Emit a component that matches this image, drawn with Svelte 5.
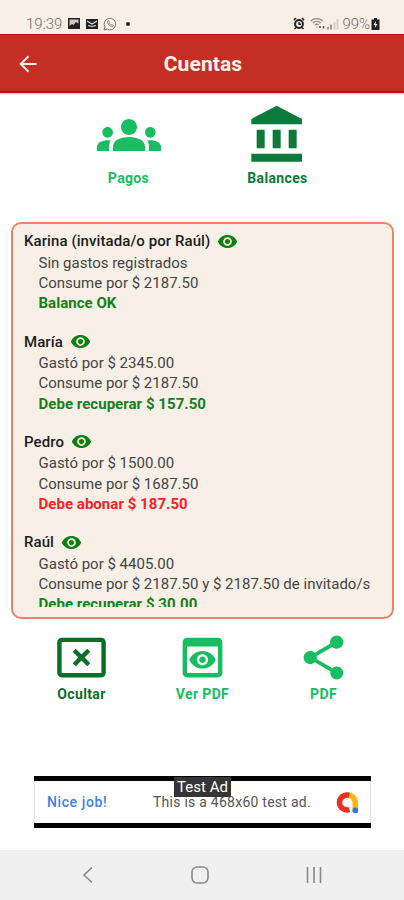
<script lang="ts">
  type Person = {
    name: string;
    lines: string[];
    result: string;
    owes?: boolean;
  };

  const people: Person[] = [
    {
      name: "Karina (invitada/o por Raúl)",
      lines: ["Sin gastos registrados", "Consume por $ 2187.50"],
      result: "Balance OK",
    },
    {
      name: "María",
      lines: ["Gastó por $ 2345.00", "Consume por $ 2187.50"],
      result: "Debe recuperar $ 157.50",
    },
    {
      name: "Pedro",
      lines: ["Gastó por $ 1500.00", "Consume por $ 1687.50"],
      result: "Debe abonar $ 187.50",
      owes: true,
    },
    {
      name: "Raúl",
      lines: [
        "Gastó por $ 4405.00",
        "Consume por $ 2187.50 y $ 2187.50 de invitado/s",
      ],
      result: "Debe recuperar $ 30.00",
    },
  ];
</script>

<div class="screen">
  <div class="status">
    <span class="time">19:39</span>
    <svg class="s-img" width="12" height="11" viewBox="0 0 12 11">
      <path d="M0 0h12v11H0z" fill="#222" />
      <path d="M1.5 1.5h9v4L8 4 5.5 7 4 6 1.5 8z" fill="#cfc8c0" />
    </svg>
    <svg class="s-mail" width="12" height="10" viewBox="0 0 12 10">
      <path d="M0 0h12v10H0z" fill="#222" />
      <path d="M1 2l5 3 5-3M2 6.5l4 1 4-1" fill="none" stroke="#e8e0d8" stroke-width="1.1" />
    </svg>
    <svg class="s-wa" width="14" height="14" viewBox="0 0 14 14" fill="none" stroke="#777">
      <path d="M1 13l.9-3A5.8 5.8 0 1 1 4.200 12.200z" />
      <path d="M4.500 4.200c0 3 2.300 5.300 5.200 5.500l.6-1.500-1.600-.8-.8.7-2-2 .6-.9-.8-1.500z" stroke-width=".8" />
    </svg>
    <span class="dot"></span>
    <div class="right">
      <svg width="12" height="13" viewBox="0 0 12 13">
        <circle cx="6" cy="7" r="3.900" fill="none" stroke="#222" stroke-width="2" />
        <path d="M.8 3.200L3 1M11.200 3.200L9 1M3 10.500L1.500 12M9 10.500l1.500 1.500M6 5v2.300h2" fill="none" stroke="#222" stroke-width="1.500" />
      </svg>
      <svg class="s-wifi" width="15" height="13" viewBox="0 0 15 13" fill="none" stroke="#888">
        <path d="M.7 4a9 9 0 0 1 12 0M2.700 6a6 6 0 0 1 8 0M4.700 8a3 3 0 0 1 4 0" stroke-width="1.200" />
        <path d="M6.700 10.500v-1" stroke-width="1.500" />
        <path d="M9 10h2M13.500 9v2.500" stroke="#444" stroke-width="1.500" />
      </svg>
      <svg class="s-signal" width="12" height="12" viewBox="0 0 12 12">
        <path d="M0 11.500h2V9H0zM3 11.500h2V6.500H3z" fill="#999" />
        <path d="M6.500 11.500h2V4h-2zM9.500 11.500h2V1h-2z" fill="#d5cfc8" />
      </svg>
      <span class="percent">99%</span>
      <svg width="9" height="12" viewBox="0 0 9 12">
        <path d="M3 0h3v1.500h2.500V12h-8V1.500H3z" fill="#222" />
        <path d="M5 3L2.500 7h1.800L3.800 10 6.500 6H4.700z" fill="#f8f0e7" />
      </svg>
    </div>
  </div>

  <header>
    <svg class="back" width="18" height="18" viewBox="0 0 18 18" fill="none" stroke="#fbeee6" stroke-width="2">
      <path d="M17.500 9H2M9.500 1.200L1.700 9l7.800 7.800" />
    </svg>
    <h1>Cuentas</h1>
  </header>

  <div class="top-actions">
    <button class="action light">
      <svg width="64" height="64" viewBox="0 0 24 24">
        <path d="M12 12.750c1.630 0 3.070.39 4.240.9 1.080.48 1.760 1.560 1.760 2.730V18H6v-1.610c0-1.180.68-2.260 1.760-2.730 1.170-.52 2.610-.91 4.240-.91zM4 13c1.100 0 2-.9 2-2s-.9-2-2-2-2 .9-2 2 .9 2 2 2zm1.130 1.100c-.37-.06-.74-.1-1.130-.1-.99 0-1.930.21-2.780.58C.48 14.900 0 15.620 0 16.430V18h4.500v-1.610c0-.83.23-1.610.63-2.290zM20 13c1.100 0 2-.9 2-2s-.9-2-2-2-2 .9-2 2 .9 2 2 2zm4 3.430c0-.81-.48-1.530-1.220-1.850-.85-.37-1.790-.58-2.780-.58-.39 0-.76.04-1.130.1.4.68.63 1.460.63 2.290V18H24v-1.570zM12 6c1.660 0 3 1.340 3 3s-1.340 3-3 3-3-1.340-3-3 1.340-3 3-3z" />
      </svg>
      <span>Pagos</span>
    </button>
    <button class="action dark">
      <svg width="64" height="64" viewBox="0 0 24 24">
        <path d="M11.500 1L2 6v2h19V6M16 10v7h3v-7M2 22h19v-3H2M10 10v7h3v-7M4 10v7h3v-7z" />
      </svg>
      <span>Balances</span>
    </button>
  </div>

  <div class="card">
    <div class="list">
      {#each people as person}
        <section>
          <div class="name">
            <span>{person.name}</span>
            <svg width="21" height="21" viewBox="0 0 24 24" fill="#0b8010">
              <path d="M12 4.500C7 4.500 2.730 7.610 1 12c1.730 4.390 6 7.500 11 7.500s9.270-3.110 11-7.500c-1.730-4.390-6-7.500-11-7.500zM12 17c-2.760 0-5-2.240-5-5s2.240-5 5-5 5 2.240 5 5-2.240 5-5 5zm0-8c-1.660 0-3 1.340-3 3s1.340 3 3 3 3-1.340 3-3-1.340-3-3-3z" />
            </svg>
          </div>
          {#each person.lines as line}
            <p>{line}</p>
          {/each}
          <p class="result" class:owes={person.owes}>{person.result}</p>
        </section>
      {/each}
    </div>
  </div>

  <div class="bottom-actions">
    <button class="action dark">
      <svg width="53" height="53" viewBox="0 0 24 24">
        <path d="M21 3H3c-1.100 0-2 .9-2 2v14c0 1.100.9 2 2 2h18c1.100 0 2-.9 2-2V5c0-1.100-.9-2-2-2zm0 16H3V5h18v14zM9.410 16L12 13.410 14.590 16 16 14.590 13.410 12 16 9.410 14.590 8 12 10.590 9.410 8 8 9.410 10.590 12 8 14.590z" />
      </svg>
      <span>Ocultar</span>
    </button>
    <button class="action light">
      <svg width="53" height="53" viewBox="0 0 24 24">
        <path d="M19 3H5c-1.110 0-2 .9-2 2v14c0 1.100.89 2 2 2h14c1.100 0 2-.9 2-2V5c0-1.100-.89-2-2-2zm0 16H5V7h14v12zM13.500 13c0 .83-.67 1.500-1.500 1.500s-1.500-.67-1.500-1.500.67-1.500 1.500-1.500 1.500.67 1.500 1.500zM12 9c-2.730 0-5.060 1.660-6 4 .94 2.340 3.270 4 6 4s5.060-1.660 6-4c-.94-2.340-3.270-4-6-4zm0 6.500c-1.380 0-2.500-1.120-2.500-2.500s1.120-2.500 2.500-2.500 2.500 1.120 2.500 2.500-1.120 2.500-2.500 2.500z" />
      </svg>
      <span>Ver PDF</span>
    </button>
    <button class="action light">
      <svg width="53" height="53" viewBox="0 0 24 24">
        <path d="M18 16.080c-.76 0-1.440.3-1.960.77L8.910 12.700c.05-.23.09-.46.09-.7s-.04-.47-.09-.7l7.050-4.110c.54.5 1.250.81 2.040.81 1.660 0 3-1.340 3-3s-1.340-3-3-3-3 1.340-3 3c0 .24.04.47.09.7L8.040 9.810C7.500 9.310 6.790 9 6 9c-1.660 0-3 1.340-3 3s1.340 3 3 3c.79 0 1.500-.31 2.040-.81l7.120 4.160c-.05.21-.08.43-.08.65 0 1.610 1.310 2.920 2.920 2.920s2.920-1.310 2.920-2.920-1.310-2.920-2.920-2.920z" />
      </svg>
      <span>PDF</span>
    </button>
  </div>

  <div class="ad">
    <span class="nice">Nice job!</span>
    <span class="copy">This is a 468x60 test ad.</span>
    <svg width="23" height="23" viewBox="0 0 23 23" fill="none" stroke-width="5.500">
      <path d="M11.500 4a8 7.500 0 0 1 7.800 7.500V19" stroke="#fbb60c" />
      <path d="M13.500 18.700A7.800 7.500 0 1 1 13 4.200" stroke="#e8301f" />
      <circle cx="19.300" cy="19.300" r="2.900" fill="#2f74e0" />
    </svg>
    <span class="badge">Test Ad</span>
  </div>

  <nav>
    <svg width="12" height="18" viewBox="0 0 12 18">
      <path d="M10 1.500L2 9l8 7.500" />
    </svg>
    <svg class="home" width="18" height="18" viewBox="0 0 18 18">
      <rect x="1" y="1" width="16" height="16" rx="5" />
    </svg>
    <svg width="16" height="16" viewBox="0 0 16 16">
      <path d="M1.500 0v16M8 0v16M14.500 0v16" />
    </svg>
  </nav>
</div>

<style>
  :global(body) {
    margin: 0;
  }

  .screen {
    display: flex;
    flex-direction: column;
    width: 404px;
    height: 900px;
    overflow: hidden;
    background: #fff;
    font-family: Roboto, sans-serif;
  }

  .status {
    display: flex;
    align-items: center;
    box-sizing: border-box;
    height: 34px;
    padding: 13px 24px 0 26px;
    background: #f8f0e7;
    color: #6f6a66;
    font-size: 15px;
  }

  .time {
    width: 42px;
    font-weight: 300;
  }

  .s-mail {
    margin-left: 6px;
  }

  .s-wa {
    margin-left: 5px;
  }

  .dot {
    width: 4px;
    height: 4px;
    margin-left: 9px;
    border-radius: 50%;
    background: #222;
  }

  .right {
    display: flex;
    align-items: center;
    margin-left: auto;
  }

  .s-wifi {
    margin-left: 5px;
  }

  .s-signal {
    margin: 0 4px 0 2px;
  }

  .percent {
    margin-right: 1px;
    font-size: 15px;
    font-weight: 300;
    letter-spacing: -0.1px;
  }

  header {
    display: flex;
    align-items: center;
    box-sizing: border-box;
    height: 59px;
    padding: 1px 19px 0;
    background: #c32f25;
    border-top: 1px solid #b50f08;
    border-bottom: 2px solid #bd0e08;
    box-shadow: 0 1px 1px #f5c4c0;
  }

  h1 {
    flex: 1;
    margin: 0 16px 0 0;
    padding-top: 1px;
    color: #fff2ea;
    font-size: 21px;
    font-weight: 700;
    letter-spacing: 0.1px;
    text-align: center;
  }

  .action {
    display: flex;
    flex-direction: column;
    align-items: center;
    padding: 0;
    border: 0;
    background: none;
    font: 700 14px/18px Roboto, sans-serif;
    letter-spacing: 0.35px;
  }

  .action svg {
    fill: currentColor;
  }

  .light {
    color: #18bd61;
  }

  .dark {
    color: #0c7a3a;
  }

  .top-actions {
    display: flex;
    height: 118px;
    padding: 10px 52px 0 54px;
    box-sizing: border-box;
  }

  .top-actions .action {
    width: 149px;
  }

  .top-actions span {
    margin-top: 2px;
  }

  .card {
    box-sizing: border-box;
    height: 397px;
    margin: 11px 10px 0 11px;
    padding: 6px 11px 10px;
    border: 2px solid #ee8467;
    border-radius: 10px;
    background: #f8efe6;
  }

  .list {
    height: 377px;
    overflow: hidden;
  }

  section {
    height: 100.2px;
    color: #444;
    font-size: 15px;
    line-height: 20.2px;
  }

  .name {
    display: flex;
    align-items: center;
    height: 23px;
    gap: 7px;
    color: #1c1c1c;
    font-weight: 500;
    letter-spacing: 0.08px;
  }

  p {
    margin: 0 0 0 14.5px;
    white-space: nowrap;
  }

  .result {
    color: #148019;
    font-weight: 700;
    letter-spacing: 0.04px;
  }

  .owes {
    color: #f5222a;
  }

  .bottom-actions {
    display: flex;
    height: 144px;
    padding: 12px 20px 0 21px;
    box-sizing: border-box;
  }

  .bottom-actions .action {
    width: 121px;
    height: 74px;
  }

  .bottom-actions span {
    margin-top: 1px;
  }

  .bottom-actions .dark {
    color: #086f28;
  }

  .ad {
    position: relative;
    display: flex;
    align-items: center;
    box-sizing: border-box;
    width: 337px;
    height: 52px;
    margin: 13px 0 0 34px;
    padding: 0 12px 0 13px;
    border-top: 5px solid #000;
    border-bottom: 5px solid #000;
    box-shadow: inset 1px 0 #ddd, inset -1px 0 #ddd;
    font-size: 14px;
  }

  .nice {
    width: 106px;
    color: #3f7fe8;
    font-weight: 500;
    letter-spacing: 0.6px;
  }

  .copy {
    flex: 1;
    color: #555;
    letter-spacing: 0.25px;
    white-space: nowrap;
  }

  .badge {
    position: absolute;
    top: -4px;
    left: 140px;
    width: 57px;
    height: 20px;
    background: #353535;
    color: #fff;
    font-size: 15px;
    line-height: 20px;
    text-align: center;
  }

  nav {
    display: flex;
    align-items: center;
    justify-content: space-between;
    box-sizing: border-box;
    height: 50px;
    margin-top: auto;
    padding: 0 82px;
    background: #f0f0f0;
  }

  nav svg {
    fill: none;
    stroke: #888;
    stroke-width: 1.6;
  }
</style>
